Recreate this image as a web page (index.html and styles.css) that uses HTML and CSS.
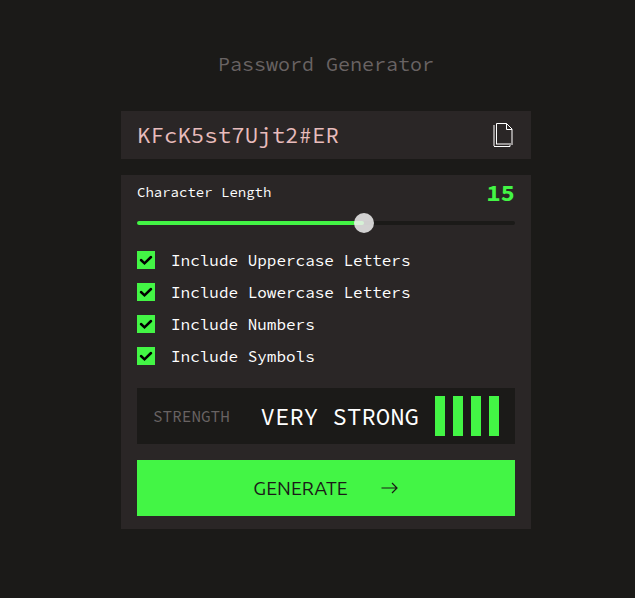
FILE: index.html
```html
<!DOCTYPE html>
<html lang="en">
<head>
<meta charset="utf-8">
<title>Password Generator</title>
<link rel="stylesheet" href="styles.css">
</head>
<body>
<main class="generator">
  <h1 class="title">Password Generator</h1>
  <section class="result">
    <span class="password">KFcK5st7Ujt2#ER</span>
    <svg class="copy" width="20" height="24" viewBox="0 0 20 24" fill="none">
      <path d="M1 2V23" stroke="#989595" stroke-width="2"/>
      <path d="M3 21H19" stroke="#989595" stroke-width="2"/>
      <path d="M19 7V22" stroke="#989595" stroke-width="2"/>
      <path d="M1 23.5H17V22" stroke="#fff"/>
      <path d="M3.5 21V0.5H13.5L19 6" stroke="#fff"/>
      <path d="M13.5 0.5V6.5H19.5" stroke="#fff"/>
    </svg>
  </section>
  <section class="panel">
    <div class="length"><span>Character Length</span><span class="count">15</span></div>
    <div class="slider"><div class="track"><div class="fill"></div></div><div class="thumb"></div></div>
    <ul class="options">
      <li><span class="box"><svg width="18" height="18" viewBox="0 0 18 18"><path class="tick" d="M4 9L7.5 12.3L14 6"/></svg></span>Include Uppercase Letters</li>
      <li><span class="box"><svg width="18" height="18" viewBox="0 0 18 18"><path class="tick" d="M4 9L7.5 12.3L14 6"/></svg></span>Include Lowercase Letters</li>
      <li><span class="box"><svg width="18" height="18" viewBox="0 0 18 18"><path class="tick" d="M4 9L7.5 12.3L14 6"/></svg></span>Include Numbers</li>
      <li><span class="box"><svg width="18" height="18" viewBox="0 0 18 18"><path class="tick" d="M4 9L7.5 12.3L14 6"/></svg></span>Include Symbols</li>
    </ul>
    <div class="strength">
      <span class="caption">STRENGTH</span>
      <span class="rating">VERY STRONG</span>
      <span class="bars"><i></i><i></i><i></i><i></i></span>
    </div>
    <button class="generate"><span>GENERATE</span>
      <svg width="17" height="12" viewBox="0 0 17 12" fill="none"><path d="M0.5 6H16M11 1L16 6L11 11" stroke="#1b1a17" stroke-width="1.2"/></svg>
    </button>
  </section>
</main>
</body>
</html>
```
FILE: styles.css
```css
* { box-sizing: border-box; }
body {
  margin: 0;
  min-height: 598px;
  background: #1b1a18;
  color: #fff;
  font-family: "Source Code Pro", "Liberation Mono", monospace;
}
.generator { width: 410px; margin-left: 121px; padding-top: 48px; }
.title {
  margin: 0 0 31px;
  height: 32px;
  line-height: 32px;
  font-size: 20px;
  font-weight: 400;
  text-align: center;
  color: #696363;
}
.result {
  display: flex;
  align-items: center;
  justify-content: space-between;
  height: 48px;
  padding: 0 18px 0 16px;
  background: #2a2626;
}
.password { font-size: 22.45px; color: #e8bcbc; }
.panel {
  height: 354px;
  margin-top: 16px;
  padding: 4px 16px 13px;
  background: #2a2626;
}
.length {
  display: flex;
  justify-content: space-between;
  height: 30px;
  line-height: 26px;
  font-size: 14px;
}
.count { font-size: 24px; font-weight: 700; line-height: 28px; color: #43f545; }
.slider { position: relative; height: 28px; padding-top: 12px; }
.track { height: 4px; border-radius: 2px; background: #1b1a18; }
.fill { width: 227px; height: 4px; border-radius: 2px; background: #43f545; }
.thumb {
  position: absolute;
  left: 217px;
  top: 4px;
  width: 20px;
  height: 20px;
  border-radius: 50%;
  background: rgba(240, 240, 240, 0.85);
}
.options { margin: 7px 0 16px; padding: 0; list-style: none; }
.options li {
  display: flex;
  align-items: center;
  gap: 16px;
  height: 32px;
  font-size: 15.97px;
}
.box { width: 18px; height: 18px; background: #43f545; }
.box svg { display: block; }
.tick { fill: none; stroke: #000; stroke-width: 2.5; stroke-linecap: round; }
.strength {
  display: flex;
  align-items: center;
  height: 56px;
  padding: 0 16px;
  background: #1b1a18;
}
.caption { font-size: 16px; color: #696363; }
.rating { margin-left: auto; margin-right: 16px; font-size: 24px; }
.bars { display: flex; gap: 8px; }
.bars i { width: 10px; height: 40px; background: #43f545; }
.generate {
  display: flex;
  align-items: center;
  justify-content: center;
  gap: 33px;
  width: 100%;
  height: 56px;
  margin-top: 16px;
  padding: 0 1px 0 0;
  border: 0;
  background: #43f545;
  color: #1b1a18;
  font-family: Ubuntu, "Noto Sans", sans-serif;
  font-size: 19.4px;
}
```
